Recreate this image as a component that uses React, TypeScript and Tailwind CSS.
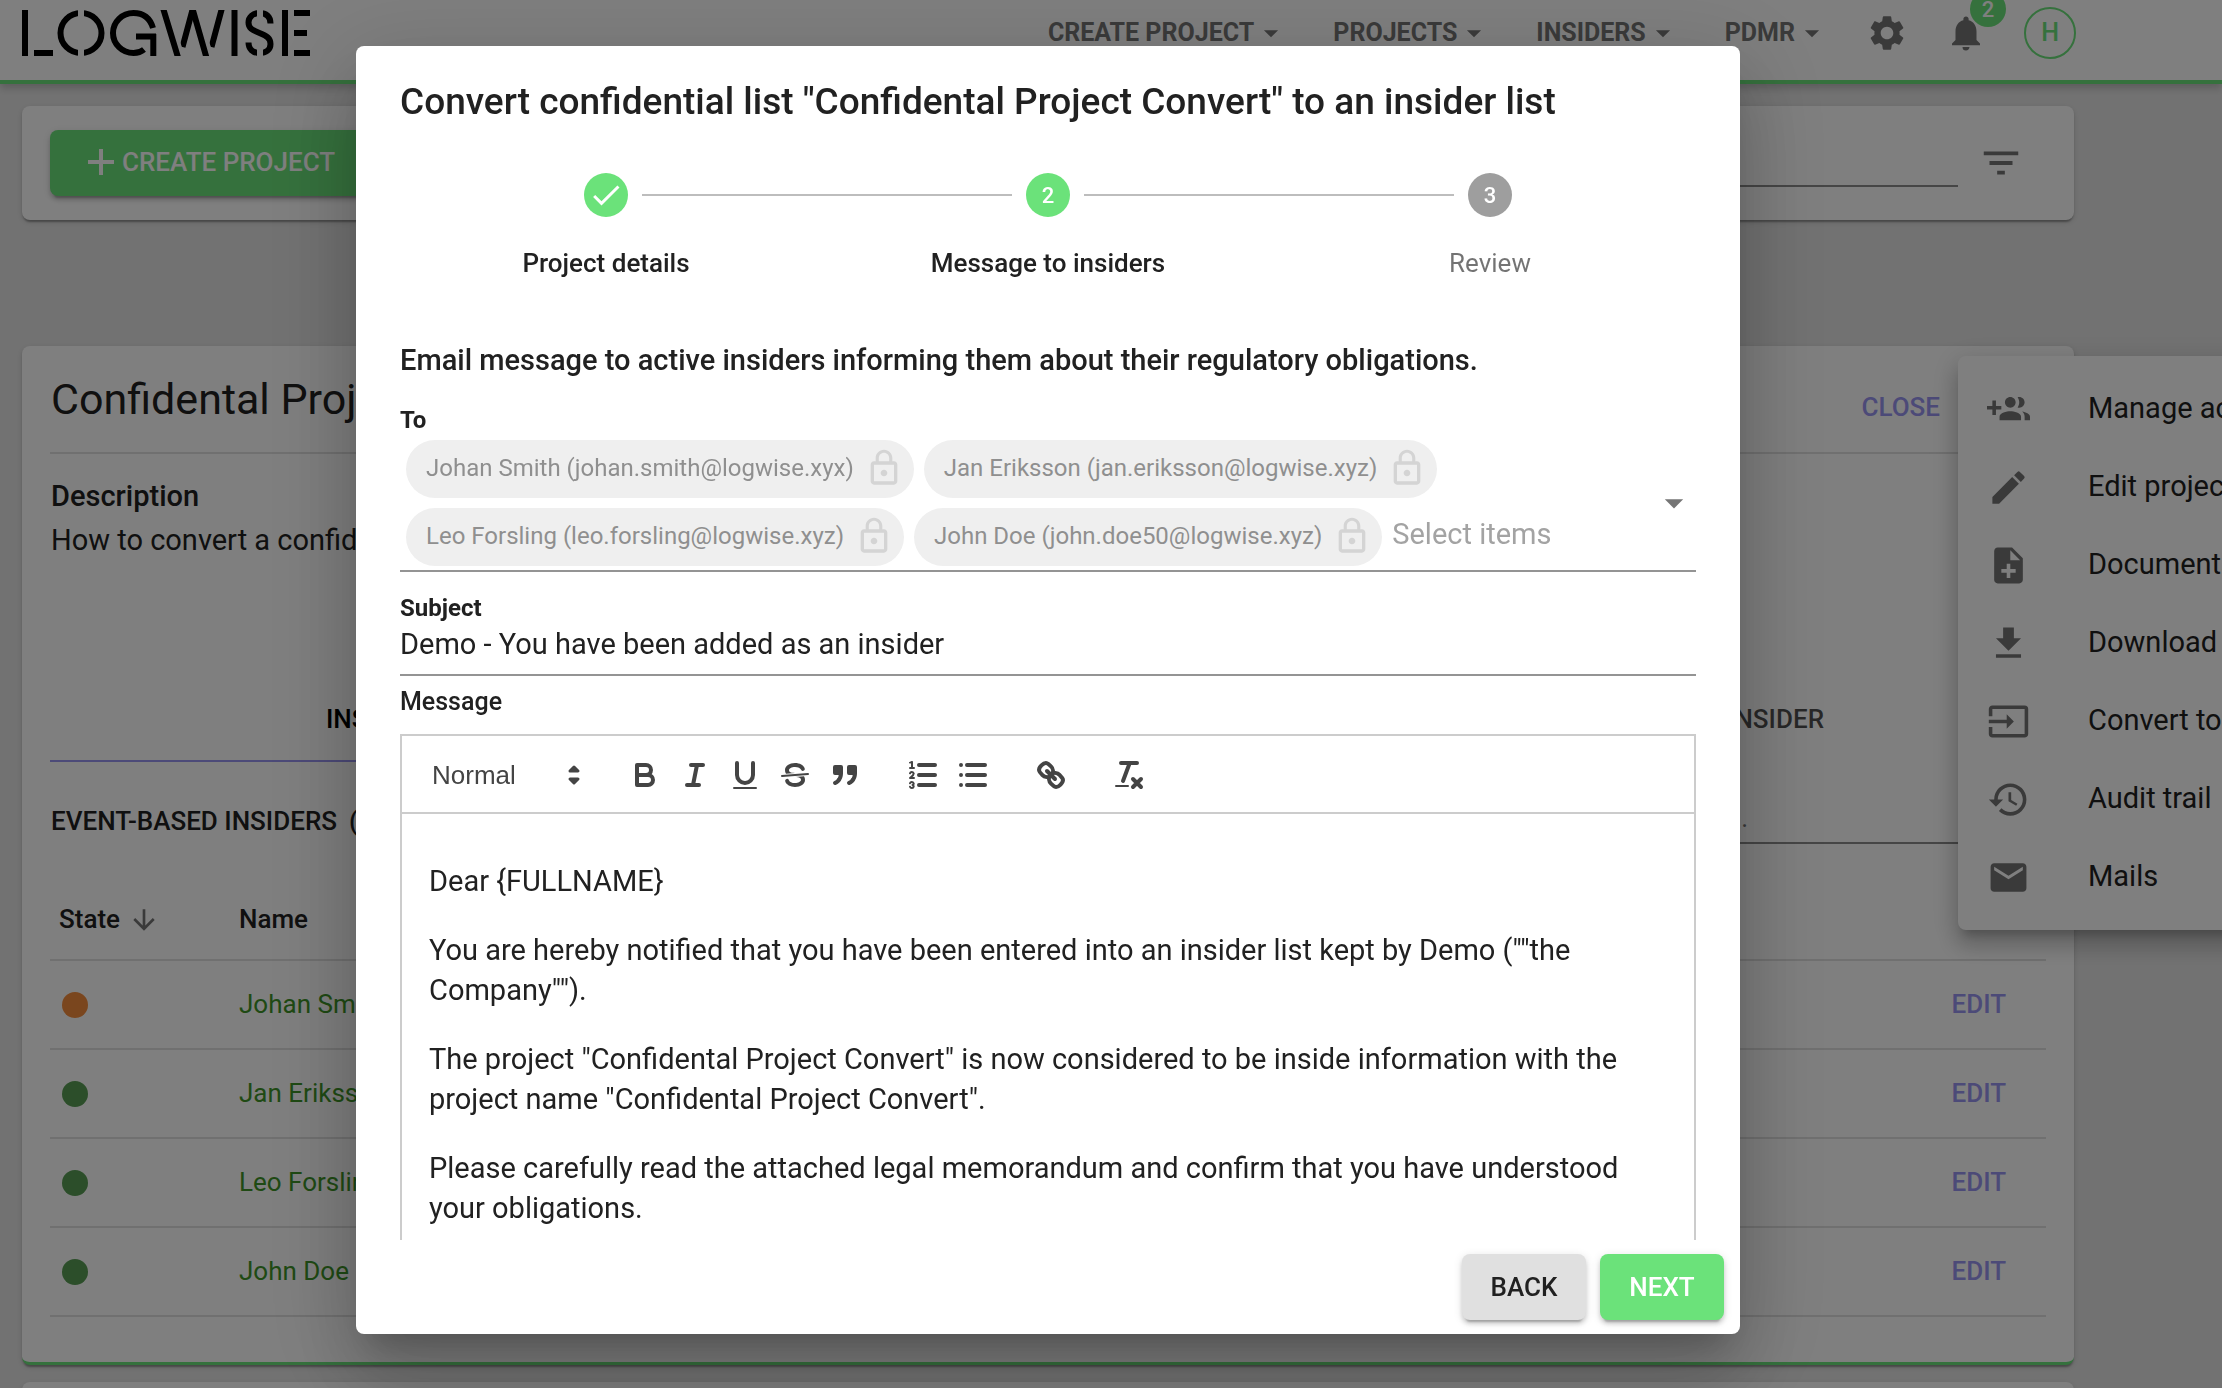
import { ReactNode, useState } from 'react';
import {
  MdArrowDownward,
  MdArrowDropDown,
  MdDone,
  MdEdit,
  MdFilterList,
  MdHistory,
  MdInput,
  MdLockOutline,
  MdMail,
  MdNoteAdd,
  MdNotifications,
  MdSettings,
} from 'react-icons/md';

const navItems = ['CREATE PROJECT', 'PROJECTS', 'INSIDERS', 'PDMR'];

const recipients = [
  'Johan Smith (johan.smith@logwise.xyx)',
  'Jan Eriksson (jan.eriksson@logwise.xyz)',
  'Leo Forsling (leo.forsling@logwise.xyz)',
  'John Doe (john.doe50@logwise.xyz)',
];

const insiders = [
  { name: 'Johan Smith', dot: 'bg-[#f58c3c]' },
  { name: 'Jan Eriksson', dot: 'bg-[#589c54]' },
  { name: 'Leo Forsling', dot: 'bg-[#589c54]' },
  { name: 'John Doe', dot: 'bg-[#589c54]' },
];

const steps = ['Project details', 'Message to insiders', 'Review'];

const paragraphs = [
  'Dear {FULLNAME}',
  'You are hereby notified that you have been entered into an insider list kept by Demo (""the Company"").',
  'The project "Confidental Project Convert" is now considered to be inside information with the project name "Confidental Project Convert".',
  'Please carefully read the attached legal memorandum and confirm that you have understood your obligations.',
];

const cardShadow =
  'shadow-[0_4px_2px_-2px_rgba(0,0,0,0.2),0_2px_2px_0_rgba(0,0,0,0.14),0_2px_6px_0_rgba(0,0,0,0.12)]';
const buttonShadow =
  'shadow-[0_6px_2px_-4px_rgba(0,0,0,0.2),0_4px_4px_0_rgba(0,0,0,0.14),0_2px_10px_0_rgba(0,0,0,0.12)]';

const GroupAddIcon = () => (
  <svg viewBox="0 0 24 24" className="size-full" fill="currentColor">
    <path d="M8 10H5V7H3v3H0v2h3v3h2v-3h3v-2zm10 1c1.66 0 2.99-1.34 2.99-3S19.66 5 18 5c-.32 0-.63.05-.91.14.57.81.9 1.79.9 2.86s-.34 2.04-.9 2.86c.28.09.59.14.91.14zm-5 0c1.66 0 2.99-1.34 2.99-3S14.66 5 13 5c-1.66 0-3 1.34-3 3s1.34 3 3 3zm6.62 2.16c.83.73 1.38 1.66 1.38 2.84v2h3v-2c0-1.54-2.37-2.49-4.38-2.84zM13 13c-2 0-6 1-6 3v2h12v-2c0-2-4-3-6-3z" />
  </svg>
);

const DownloadIcon = () => (
  <svg viewBox="0 0 24 24" className="size-full" fill="currentColor">
    <path d="M19 9h-4V3H9v6H5l7 7 7-7zM5 18v2h14v-2H5z" />
  </svg>
);

const menuItems: { label: string; icon: ReactNode }[] = [
  { label: 'Manage access', icon: <GroupAddIcon /> },
  { label: 'Edit project', icon: <MdEdit className="size-full" /> },
  { label: 'Documents', icon: <MdNoteAdd className="size-full" /> },
  { label: 'Download', icon: <DownloadIcon /> },
  { label: 'Convert to insider list', icon: <MdInput className="size-full" /> },
  { label: 'Audit trail', icon: <MdHistory className="size-full" /> },
  { label: 'Mails', icon: <MdMail className="size-full" /> },
];

// Stencil word mark, every bar is 6 units thick
const Logo = () => (
  <svg width="288" height="46" viewBox="0 0 288 46" role="img" aria-label="Logwise" fill="none" stroke="#000" strokeWidth="6">
    <path d="M3 0V46M12 43H31" />
    <ellipse cx="59" cy="23" rx="20.5" ry="20" />
    <path d="M59 -1V47" stroke="#fff" />
    <path d="M131 18C128 8 121 3 111.500 3A20.500 20 0 0 0 111.500 43C116 43 119 42 122 39.500" />
    <path d="M114 26.500H134M131.300 24V46" />
    <path d="M171 -2L160.500 37M200 -2L189.500 37" />
    <path d="M146.500 0L160.500 46M175.500 0L189.500 46" stroke="#fff" strokeWidth="4" />
    <path d="M141 -2L156.200 48M170.300 -2L184.600 48" />
    <path d="M212.500 0V46" />
    <path d="M248.500 13.500C248.500 6 244 3 237.500 3C231 3 226.500 7 226.500 12.500C226.500 18 230 20 237.500 23C245 26 248.500 28.500 248.500 34C248.500 40 244 43 237.500 43C231 43 226.500 39 226.500 32.500" />
    <path d="M238 -1V8M238 38V47" stroke="#fff" />
    <path d="M263 0V46M272 3H288M272 23H285M272 43H288" />
  </svg>
);

const ToolIcon = ({ children }: { children: ReactNode }) => (
  <svg viewBox="0 0 18 18" className="size-9" fill="none" stroke="#444" strokeWidth="2" strokeLinecap="round" strokeLinejoin="round">
    {children}
  </svg>
);

const toolGroups: { label: string; icon: ReactNode }[][] = [
  [
    {
      label: 'Bold',
      icon: (
        <>
          <path d="M5,4H9.5A2.5,2.5,0,0,1,12,6.5v0A2.5,2.5,0,0,1,9.5,9H5V4Z" />
          <path d="M5,9h5.5A2.5,2.5,0,0,1,13,11.5v0A2.5,2.5,0,0,1,10.5,14H5V9Z" />
        </>
      ),
    },
    {
      label: 'Italic',
      icon: (
        <>
          <line x1="7" x2="13" y1="4" y2="4" />
          <line x1="5" x2="11" y1="14" y2="14" />
          <line x1="8" x2="10" y1="14" y2="4" />
        </>
      ),
    },
    {
      label: 'Underline',
      icon: (
        <>
          <path d="M5,3V9a4.012,4.012,0,0,0,4,4H9a4.012,4.012,0,0,0,4-4V3" />
          <rect x="3" y="15" width="12" height="1" rx="0.5" fill="#444" stroke="none" />
        </>
      ),
    },
    {
      label: 'Strikethrough',
      icon: (
        <>
          <line x1="15.5" x2="2.5" y1="8.5" y2="9.5" strokeWidth="1" />
          <path
            fill="#444"
            stroke="none"
            d="M9.007,8C6.542,7.791,6,7.519,6,6.5,6,5.792,7.283,5,9,5c1.571,0,2.765.679,2.969,1.309a1,1,0,0,0,1.9-.617C13.356,4.106,11.354,3,9,3,6.2,3,4,4.538,4,6.5a3.2,3.2,0,0,0,.5,1.843Z"
          />
          <path
            fill="#444"
            stroke="none"
            d="M8.984,10C11.457,10.208,12,10.479,12,11.5c0,0.708-1.283,1.5-3,1.5-1.571,0-2.765-.679-2.969-1.309a1,1,0,1,0-1.9.617C4.644,13.894,6.646,15,9,15c2.8,0,5-1.538,5-3.5a3.2,3.2,0,0,0-.5-1.843Z"
          />
        </>
      ),
    },
    {
      label: 'Quote',
      icon: (
        <>
          <rect x="4" y="5" width="3" height="3" fill="#444" />
          <rect x="11" y="5" width="3" height="3" fill="#444" />
          <path fill="#444" fillRule="evenodd" d="M7,8c0,4.031-3,5-3,5" />
          <path fill="#444" fillRule="evenodd" d="M14,8c0,4.031-3,5-3,5" />
        </>
      ),
    },
  ],
  [
    {
      label: 'Numbered list',
      icon: (
        <>
          <path d="M7 4H15M7 9H15M7 14H15" />
          <line x1="2.5" x2="4.5" y1="5.5" y2="5.5" strokeWidth="1" />
          <path
            fill="#444"
            stroke="none"
            d="M3.5,6A0.5,0.5,0,0,1,3,5.5V3.085l-0.276.138A0.5,0.5,0,0,1,2.053,3c-0.124-.247-0.023-0.324.224-0.447l1-.5A0.5,0.5,0,0,1,4,2.5v3A0.5,0.5,0,0,1,3.5,6Z"
          />
          <path strokeWidth="1" d="M4.5,10.5h-2c0-.234,1.85-1.076,1.85-2.234A0.959,0.959,0,0,0,2.5,8.156" />
          <path
            strokeWidth="1"
            d="M2.5,14.846a0.959,0.959,0,0,0,1.85-.109A0.7,0.7,0,0,0,3.75,14a0.688,0.688,0,0,0,.6-0.736,0.959,0.959,0,0,0-1.85-.109"
          />
        </>
      ),
    },
    {
      label: 'Bulleted list',
      icon: <path d="M6 4H15M6 9H15M6 14H15M3 4V4M3 9V9M3 14V14" />,
    },
  ],
  [
    {
      label: 'Link',
      icon: (
        <>
          <line x1="7" x2="11" y1="7" y2="11" />
          <path d="M8.9,4.577a3.476,3.476,0,0,1,.36,4.679A3.476,3.476,0,0,1,4.577,8.9C3.185,7.5,2.035,6.4,4.217,4.217S7.5,3.185,8.9,4.577Z" />
          <path d="M13.423,9.1a3.476,3.476,0,0,0-4.679-.36,3.476,3.476,0,0,0,.36,4.679c1.392,1.392,2.5,2.542,4.679.36S14.815,10.5,13.423,9.1Z" />
        </>
      ),
    },
  ],
  [
    {
      label: 'Clear formatting',
      icon: (
        <>
          <path d="M5 3H13M6 12L9.350 3M11 11L15 15M15 11L11 15" />
          <rect x="2" y="14" width="7" height="1" rx="0.5" fill="#444" stroke="none" />
        </>
      ),
    },
  ],
];

const Header = () => (
  <header className="border-b-4 border-[#6be27a] bg-white shadow-[0_4px_8px_rgba(0,0,0,0.2)]">
    <div className="flex h-20 max-w-[2096px] items-center justify-between pb-3.5 pl-[22px] pr-5">
      <Logo />
      <div className="flex items-center gap-[37px] text-[#757575]">
        <nav className="flex items-center gap-[45px]">
          {navItems.map((item) => (
            <button key={item} className="flex items-center text-[25px] font-bold">
              {item}
              <MdArrowDropDown size={34} />
            </button>
          ))}
        </nav>
        <button aria-label="Settings">
          <MdSettings size={42} />
        </button>
        <button aria-label="Notifications" className="relative">
          <MdNotifications size={42} />
          <span className="absolute -top-[21px] left-[25px] flex size-9 items-center justify-center rounded-full bg-[#6be27a] text-[22px] font-medium text-white">
            2
          </span>
        </button>
        <button className="flex size-[52px] items-center justify-center rounded-full border-2 border-[#6be27a] text-[25px] font-medium text-[#6be27a]">
          H
        </button>
      </div>
    </div>
  </header>
);

const ActionBar = () => (
  <section className={`flex h-[114px] items-center justify-between rounded-lg bg-white px-7 ${cardShadow}`}>
    <button className={`flex h-[66px] items-center gap-1 rounded-lg bg-[#6be27a] px-8 pb-0.5 text-[26px] font-medium text-white ${buttonShadow}`}>
      <svg viewBox="0 0 36 36" className="size-9" stroke="currentColor" strokeWidth="4">
        <path d="M19 5V31M6 18H32" />
      </svg>
      CREATE PROJECT
    </button>
    <div className="flex items-center gap-5 pr-[22px]">
      <input aria-label="Search projects" className="h-12 w-[600px] border-b-2 border-[#8c8c8c] outline-none" />
      <button aria-label="Filter" className="text-[#757575]">
        <MdFilterList size={46} />
      </button>
    </div>
  </section>
);

const ProjectCard = () => (
  <section className={`mt-[126px] rounded-lg border-b-[3px] border-[#6be27a] bg-white px-7 pb-[45px] ${cardShadow}`}>
    <div className="flex h-[108px] items-center justify-between border-b-2 border-[#e0e0e0] pr-[106px] pl-px">
      <h1 className="text-[43px]">Confidental Project Convert</h1>
      <button className="mt-4 text-[26px] font-medium text-[#9994f0]">CLOSE</button>
    </div>
    <h2 className="mt-[22px] pl-px text-[29px] leading-10 font-medium">Description</h2>
    <p className="mt-1 pl-px text-[29px] leading-10">How to convert a confidential list to an insider list</p>

    <div className="mt-[116px] flex text-[26px] font-medium">
      <button className="flex h-[86px] flex-1 items-center border-b-2 border-[#9994f0] pt-0.5 pl-[276px] text-black">
        INSIDERS
      </button>
      <button className="flex h-[86px] flex-1 items-center justify-end pr-[222px] text-black/70">
        ADD NEW INSIDER
      </button>
    </div>

    <div className="mt-9 flex h-[46px] items-center justify-between pl-px">
      <h3 className="flex gap-3 text-[26px] font-medium">
        <span>EVENT-BASED INSIDERS</span>
        <span>(4)</span>
      </h3>
      <input
        aria-label="Search insiders"
        placeholder="Search insiders..."
        className="h-[46px] w-[496px] border-b-2 border-[#8c8c8c] pb-1 text-[26px] outline-none placeholder:text-[#757575]"
      />
    </div>

    <table className="mt-9 w-full text-left text-[26px]">
      <thead>
        <tr className="h-[80px] border-b-2 border-[#e0e0e0]">
          <th className="w-[179px] pl-[9px] font-medium">
            <button className="flex items-center gap-2">
              State
              <MdArrowDownward size={32} className="text-[#757575]" />
            </button>
          </th>
          <th className="pl-2.5 font-medium">Name</th>
          <th />
        </tr>
      </thead>
      <tbody>
        {insiders.map((insider) => (
          <tr key={insider.name} className="h-[89px] border-b-2 border-[#e0e0e0]">
            <td className="pl-3">
              <span className={`block size-[26px] rounded-full ${insider.dot}`} />
            </td>
            <td className="pl-2.5">
              <a href="#" className="text-[#3e9428]">
                {insider.name}
              </a>
            </td>
            <td className="pr-10 text-right">
              <button className="font-medium text-[#9994f0]">EDIT</button>
            </td>
          </tr>
        ))}
      </tbody>
    </table>
  </section>
);

const ProjectMenu = () => (
  <ul className="absolute top-[356px] left-[1958px] w-[480px] rounded-lg bg-white py-3.5 shadow-[0_10px_10px_-6px_rgba(0,0,0,0.2),0_16px_20px_2px_rgba(0,0,0,0.14),0_6px_28px_4px_rgba(0,0,0,0.12)]">
    {menuItems.map((item) => (
      <li key={item.label}>
        <button className="flex h-[78px] w-full items-center gap-[58px] pl-[29px] text-[29px] whitespace-nowrap">
          <span className="size-[43px] text-[#757575]">{item.icon}</span>
          {item.label}
        </button>
      </li>
    ))}
  </ul>
);

const Stepper = ({ active }: { active: number }) => (
  <ol className="mx-[29px] mt-[49px] flex">
    {steps.map((step, i) => (
      <li key={step} className="flex flex-1 flex-col items-center">
        <div className="flex w-full items-center gap-3.5">
          <span className={i > 0 ? 'h-0.5 flex-1 -ml-3.5 bg-[#bdbdbd]' : 'flex-1 -ml-3.5'} />
          <span
            className={`flex size-11 items-center justify-center rounded-full text-[22px] font-medium text-white ${
              i <= active ? 'bg-[#6be27a]' : 'bg-[#9e9e9e]'
            }`}
          >
            {i < active ? <MdDone size={36} /> : i + 1}
          </span>
          <span className={i < steps.length - 1 ? 'h-0.5 flex-1 -mr-3.5 bg-[#bdbdbd]' : 'flex-1 -mr-3.5'} />
        </div>
        <span className={`mt-7 text-[26px] leading-9 ${i <= active ? 'font-medium' : 'text-black/55'}`}>{step}</span>
      </li>
    ))}
  </ol>
);

const MessageEditor = () => (
  <div className="mt-4 border-2 border-[#ccc]">
    <div className="flex h-[78px] items-center border-b-2 border-[#ccc] pt-0.5 pl-[30px]">
      <div className="relative mr-7 flex w-[160px] items-center">
        <select
          aria-label="Text style"
          className="w-full appearance-none bg-transparent font-['Liberation_Sans',sans-serif] text-[26px] font-medium text-[#444] outline-none"
        >
          <option>Normal</option>
          <option>Heading 1</option>
          <option>Heading 2</option>
        </select>
        <svg
          viewBox="0 0 18 18"
          className="pointer-events-none absolute right-0 size-9"
          fill="#444"
          stroke="#444"
          strokeWidth="1.5"
          strokeLinejoin="round"
        >
          <path d="M7 11L9 13L11 11ZM7 7L9 5L11 7Z" />
        </svg>
      </div>
      {toolGroups.map((group) => (
        <div key={group[0].label} className="mr-7 flex">
          {group.map((tool) => (
            <button key={tool.label} aria-label={tool.label} className="flex w-[50px] justify-center">
              <ToolIcon>{tool.icon}</ToolIcon>
            </button>
          ))}
        </div>
      ))}
    </div>
    <div
      id="message"
      role="textbox"
      aria-multiline="true"
      aria-labelledby="message-label"
      contentEditable
      suppressContentEditableWarning
      className="flex flex-col gap-[29px] pt-[47px] pr-6 pb-12 pl-[27px] text-[29px] leading-10 outline-none"
    >
      {paragraphs.map((text) => (
        <p key={text}>{text}</p>
      ))}
    </div>
  </div>
);

const ConvertDialog = () => {
  const [subject, setSubject] = useState('Demo - You have been added as an insider');

  return (
    <div className="fixed inset-0 bg-black/50">
      <div className="flex max-w-[2096px] justify-center">
        <div
          role="dialog"
          aria-modal="true"
          aria-labelledby="dialog-title"
          className="mt-[46px] flex h-[calc(100vh-100px)] w-full max-w-[1384px] flex-col rounded-lg bg-white shadow-[0_22px_30px_-14px_rgba(0,0,0,0.2),0_48px_76px_6px_rgba(0,0,0,0.14),0_18px_92px_16px_rgba(0,0,0,0.12)]"
        >
          <h2 id="dialog-title" className="px-11 pt-[34px] text-[37px] leading-[44px] font-medium">
            Convert confidential list "Confidental Project Convert" to an insider list
          </h2>
          <Stepper active={1} />

          <div className="min-h-0 flex-1 overflow-hidden px-11 pt-[59px]">
            <h3 className="text-[29px] leading-10 font-medium">
              Email message to active insiders informing them about their regulatory obligations.
            </h3>

            <label htmlFor="to" className="mt-6 block text-[24px] leading-8 font-bold">
              To
            </label>
            <div className="flex items-center border-b-2 border-[#949494] py-1">
              <div className="flex flex-1 flex-wrap items-center gap-2.5 pl-1.5">
                {recipients.map((recipient) => (
                  <span key={recipient} className="flex h-[58px] items-center gap-2.5 rounded-full bg-[#efefef] pr-2.5 pb-0.5 pl-5 text-[24px] text-[#8f8f8f]">
                    {recipient}
                    <MdLockOutline size={40} className="text-[#d4d4d4]" />
                  </span>
                ))}
                <input id="to" placeholder="Select items" className="w-[220px] pb-1 text-[29px] outline-none placeholder:text-[#a3a3a3]" />
              </div>
              <button aria-label="Open recipients" className="text-[#757575]">
                <MdArrowDropDown size={44} />
              </button>
            </div>

            <label htmlFor="subject" className="mt-5 block text-[24px] leading-8 font-bold">
              Subject
            </label>
            <input
              id="subject"
              value={subject}
              onChange={(e) => setSubject(e.target.value)}
              className="block h-[52px] w-full border-b-2 border-[#949494] pb-2.5 text-[29px] outline-none"
            />

            <div id="message-label" className="mt-2.5 text-[25px] leading-8 font-medium">
              Message
            </div>
            <MessageEditor />
          </div>

          <div className="flex justify-end gap-3.5 px-4 py-3.5">
            <button className={`h-[66px] w-[124px] rounded-lg bg-[#e0e0e0] text-[26px] font-medium ${buttonShadow}`}>BACK</button>
            <button className={`h-[66px] w-[124px] rounded-lg bg-[#6be27a] text-[26px] font-medium text-white ${buttonShadow}`}>
              NEXT
            </button>
          </div>
        </div>
      </div>
    </div>
  );
};

const App = () => (
  <div className="relative h-screen overflow-hidden bg-[#e5e5e5] font-[Roboto,sans-serif] text-[#212121]">
    <Header />
    <main className="max-w-[2096px] px-[22px] pt-[22px]">
      <ActionBar />
      <ProjectCard />
      <section className={`mt-[17px] h-40 rounded-lg bg-white ${cardShadow}`} />
    </main>
    <ProjectMenu />
    <ConvertDialog />
  </div>
);

export default App;
